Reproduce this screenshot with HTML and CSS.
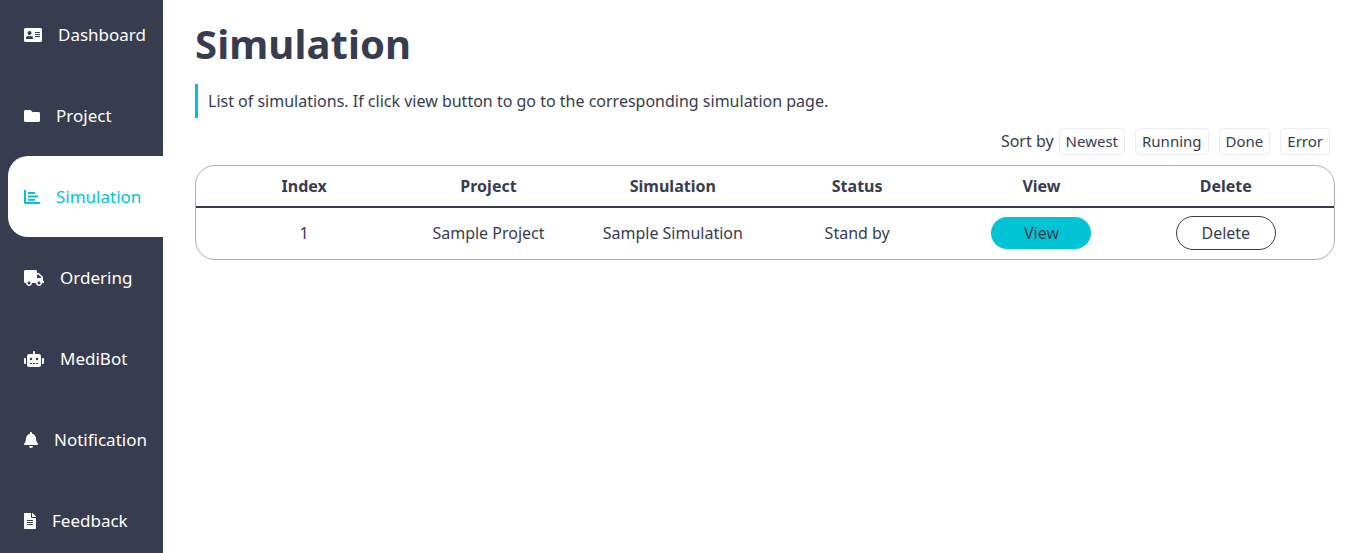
FILE: index.html
```html
<!DOCTYPE html>
<html lang="en">
<head>
    <meta charset="UTF-8">
    <title>Simulation</title>
    <link rel="stylesheet" href="styles.css">
</head>
<body>
    <div class="app">
        <!-- sidebar -->
        <nav class="sidebar">
            <a class="nav-item">
                <svg class="nav-icon" width="18" height="16" viewBox="0 0 576 512"><path d="M528 32H48C21.5 32 0 53.5 0 80v352c0 26.5 21.5 48 48 48h480c26.5 0 48-21.5 48-48V80c0-26.5-21.5-48-48-48zm-352 96c35.3 0 64 28.7 64 64s-28.7 64-64 64-64-28.7-64-64 28.7-64 64-64zm112 236.8c0 10.6-10 19.2-22.4 19.2H86.4C74 384 64 375.4 64 364.8v-19.2c0-31.8 30.1-57.6 67.2-57.6h5c12.3 5.1 25.7 8 39.8 8s27.6-2.9 39.8-8h5c37.1 0 67.2 25.8 67.2 57.6v19.2zM512 312c0 4.4-3.6 8-8 8H360c-4.4 0-8-3.6-8-8v-16c0-4.4 3.6-8 8-8h144c4.4 0 8 3.6 8 8v16zm0-64c0 4.4-3.6 8-8 8H360c-4.4 0-8-3.6-8-8v-16c0-4.4 3.6-8 8-8h144c4.4 0 8 3.6 8 8v16zm0-64c0 4.4-3.6 8-8 8H360c-4.4 0-8-3.6-8-8v-16c0-4.4 3.6-8 8-8h144c4.4 0 8 3.6 8 8v16z"/></svg>
                Dashboard
            </a>
            <a class="nav-item">
                <svg class="nav-icon" width="16" height="16" viewBox="0 0 512 512"><path d="M464 128H272l-64-64H48C21.49 64 0 85.49 0 112v288c0 26.51 21.49 48 48 48h416c26.51 0 48-21.49 48-48V176c0-26.51-21.49-48-48-48z"/></svg>
                Project
            </a>
            <a class="nav-item active">
                <svg class="nav-icon" width="16" height="16" viewBox="0 0 16 16"><path d="M0 1h2v12h14v2H1a1 1 0 0 1-1-1zM4 3h7v2H4zM4 6.500h10v2H4zM4 10h7v1.800H4z"/></svg>
                Simulation
            </a>
            <a class="nav-item">
                <svg class="nav-icon" width="20" height="16" viewBox="0 0 640 512"><path d="M624 352h-16V243.900c0-12.700-5.100-24.900-14.100-33.900L494 110.100c-9-9-21.200-14.100-33.900-14.100H416V48c0-26.500-21.500-48-48-48H48C21.500 0 0 21.500 0 48v320c0 26.500 21.500 48 48 48h16c0 53 43 96 96 96s96-43 96-96h128c0 53 43 96 96 96s96-43 96-96h48c8.800 0 16-7.200 16-16v-32c0-8.800-7.200-16-16-16zM160 464c-26.500 0-48-21.500-48-48s21.500-48 48-48 48 21.500 48 48-21.500 48-48 48zm320 0c-26.500 0-48-21.500-48-48s21.500-48 48-48 48 21.500 48 48-21.500 48-48 48zm80-208H416V144h44.100l99.900 99.900V256z"/></svg>
                Ordering
            </a>
            <a class="nav-item">
                <svg class="nav-icon" width="20" height="16" viewBox="0 0 640 512"><path d="M32,224H64V416H32A31.960,31.960,0,0,1,0,384V256A31.960,31.960,0,0,1,32,224Zm512-48V448a64.060,64.060,0,0,1-64,64H160a64.060,64.060,0,0,1-64-64V176a79.970,79.970,0,0,1,80-80H288V32a32,32,0,0,1,64,0V96H464A79.970,79.970,0,0,1,544,176ZM264,256a40,40,0,1,0-40,40A39.990,39.990,0,0,0,264,256Zm-8,128H192v32h64Zm96,0H288v32h64ZM456,256a40,40,0,1,0-40,40A39.990,39.990,0,0,0,456,256Zm-8,128H384v32h64ZM640,256V384a31.960,31.960,0,0,1-32,32H576V224h32A31.960,31.960,0,0,1,640,256Z"/></svg>
                MediBot
            </a>
            <a class="nav-item">
                <svg class="nav-icon" width="14" height="16" viewBox="0 0 448 512"><path d="M224 512c35.320 0 63.970-28.650 63.970-64H160.030c0 35.350 28.650 64 63.970 64zm215.390-149.710c-19.320-20.760-55.470-51.990-55.470-154.290 0-77.700-54.480-139.900-127.940-155.160V32c0-17.670-14.320-32-31.980-32s-31.980 14.330-31.980 32v20.840C118.560 68.100 64.080 130.300 64.080 208c0 102.300-36.150 133.530-55.470 154.290-6 6.450-8.660 14.160-8.610 21.710.11 16.400 12.980 32 32.100 32h383.800c19.120 0 32-15.600 32.100-32 .05-7.550-2.610-15.270-8.610-21.710z"/></svg>
                Notification
            </a>
            <a class="nav-item">
                <svg class="nav-icon" width="12" height="16" viewBox="0 0 384 512"><path d="M224 136V0H24C10.700 0 0 10.700 0 24v464c0 13.300 10.700 24 24 24h336c13.300 0 24-10.700 24-24V160H248c-13.200 0-24-10.800-24-24zm64 236c0 6.600-5.400 12-12 12H108c-6.600 0-12-5.400-12-12v-8c0-6.600 5.400-12 12-12h168c6.600 0 12 5.400 12 12v8zm0-64c0 6.600-5.400 12-12 12H108c-6.600 0-12-5.400-12-12v-8c0-6.600 5.400-12 12-12h168c6.600 0 12 5.400 12 12v8zm0-72v8c0 6.600-5.400 12-12 12H108c-6.600 0-12-5.400-12-12v-8c0-6.600 5.400-12 12-12h168c6.600 0 12 5.400 12 12zm96-114.100v6.100H256V0h6.100c6.400 0 12.500 2.500 17 7l97.900 98c4.500 4.500 7 10.600 7 16.900z"/></svg>
                Feedback
            </a>
        </nav>

        <!-- main content -->
        <main class="content">
            <h1 class="page-title">Simulation</h1>
            <p class="page-desc">List of simulations. If click view button to go to the corresponding simulation page.</p>

            <div class="sort-bar">
                <span class="sort-label">Sort by</span>
                <button class="sort-btn">Newest</button>
                <button class="sort-btn">Running</button>
                <button class="sort-btn">Done</button>
                <button class="sort-btn">Error</button>
            </div>

            <div class="sim-table">
                <div class="sim-row sim-head">
                    <div>Index</div>
                    <div>Project</div>
                    <div>Simulation</div>
                    <div>Status</div>
                    <div>View</div>
                    <div>Delete</div>
                </div>
                <div class="sim-row sim-body">
                    <div class="sim-index">1</div>
                    <div>Sample Project</div>
                    <div>Sample Simulation</div>
                    <div>Stand by</div>
                    <div><button class="pill pill-view">View</button></div>
                    <div><button class="pill pill-delete">Delete</button></div>
                </div>
            </div>
        </main>
    </div>
</body>
</html>
```

FILE: styles.css
```css
/* base */
html, body {
    height: 100%;
}

body {
    margin: 0;
    font-family: "Noto Sans", sans-serif;
    color: #383c4f;
    background-color: #fff;
    overflow: hidden;
}

.app {
    display: flex;
    height: 100%;
}

/* sidebar */
.sidebar {
    width: 155px;
    padding-left: 8px;
    flex-shrink: 0;
    background-color: #383c4f;
    overflow: hidden;
}

.nav-item {
    display: flex;
    align-items: center;
    gap: 16px;
    height: 81px;
    padding-left: 16px;
    font-size: 17px;
    color: #fff;
    border-radius: 20px 0 0 20px;
}

.nav-item:first-child {
    margin-top: -6px;
}

.nav-icon {
    fill: currentColor;
    flex-shrink: 0;
}

.nav-item.active {
    background-color: #fff;
    color: #00c4d6;
}

/* main */
.content {
    flex: 1;
    padding: 16px 16px 0 32px;
}

.page-title {
    margin: 0;
    font-size: 40px;
    line-height: 56px;
    font-weight: 700;
    letter-spacing: 0.1px;
}

.page-desc {
    margin: 12px 0 0;
    padding-left: 10px;
    border-left: 3px solid #00c4d6;
    font-size: 16px;
    line-height: 34px;
}

.sort-bar {
    display: flex;
    justify-content: flex-end;
    align-items: center;
    margin-top: 10px;
    padding-right: 5px;
    font-size: 16px;
}

.sort-label {
    margin-right: 5px;
    padding-bottom: 2px;
}

.sort-btn {
    margin-right: 10px;
    padding: 0 6px 2px;
    height: 27px;
    font: inherit;
    font-size: 15px;
    color: inherit;
    background: #fff;
    border: 1px solid #ebebf3;
    border-radius: 4px;
}

.sort-btn:last-child {
    margin-right: 0;
}

/* table */
.sim-table {
    margin-top: 10px;
    border: 1px solid #aeaeb6;
    border-radius: 20px;
    font-size: 16px;
}

.sim-row {
    display: grid;
    grid-template-columns: repeat(6, 1fr);
    align-items: center;
    padding: 0 16px 1px;
    text-align: center;
}

.sim-head {
    height: 39px;
    font-weight: 700;
    border-bottom: 2px solid #383c4f;
}

.sim-body {
    height: 50px;
}

.sim-index {
    color: #4b2f7a;
}

.pill {
    display: block;
    width: 100px;
    margin: 0 auto;
    font: inherit;
    color: inherit;
    border-radius: 17px;
}

.pill-view {
    height: 32px;
    background-color: #00c4d6;
    border: none;
}

.pill-delete {
    height: 34px;
    background-color: #fff;
    border: 1px solid #383c4f;
}
```
